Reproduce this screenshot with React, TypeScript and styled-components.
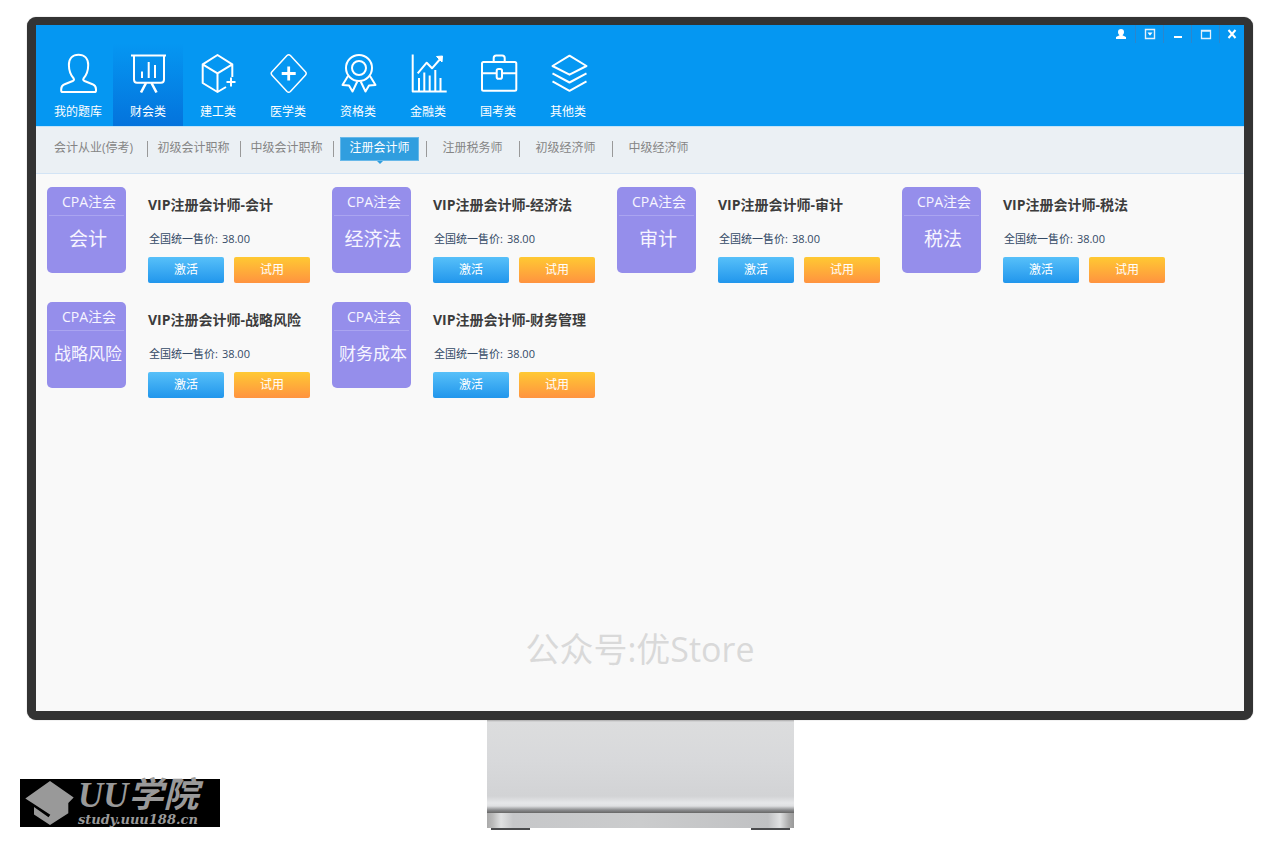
import React from "react";
import styled, { createGlobalStyle, css } from "styled-components";

const GlobalStyle = createGlobalStyle`
  * { box-sizing: border-box; }
  body {
    margin: 0;
    background: #fff;
    font-family: "Open Sans", "Noto Sans CJK SC", sans-serif;
    font-size: 12px;
  }
  h2, p, ul { margin: 0; padding: 0; }
  a { text-decoration: none; }
  button { border: 0; padding: 0; font: inherit; cursor: pointer; }
`;

const Page = styled.div`
  min-height: 100vh;
  display: flex;
  flex-direction: column;
  padding-bottom: 17px;
`;

const Monitor = styled.div`
  flex: 1;
  display: flex;
  flex-direction: column;
  margin: 17px 27px 0;
  border: 9px solid #333;
  border-top-width: 8px;
  border-radius: 9px;
  box-shadow: 0 0 1px #777;
  background: #333;
`;

const Screen = styled.main`
  flex: 1;
  display: flex;
  flex-direction: column;
  background: #f9f9f9;
`;

const Header = styled.header`
  background: #0597f2;
  color: #fff;
`;

const WindowControls = styled.div`
  display: flex;
  justify-content: flex-end;
  height: 18px;
`;

const ControlButton = styled.button`
  width: 28px;
  display: flex;
  align-items: center;
  justify-content: center;
  background: none;
  color: #fff;
  & + & { border-left: 1px solid #2c86cc; }
  &:last-child { width: 25px; }
`;

const CategoryNav = styled.nav`
  display: flex;
  padding-left: 7px;
`;

const Category = styled.a<{ $active?: boolean }>`
  width: 70px;
  height: 83px;
  padding-top: 10px;
  display: flex;
  flex-direction: column;
  align-items: center;
  gap: 9px;
  color: #fff;
  line-height: 16px;
  white-space: nowrap;
  ${(p) => p.$active && css`background: linear-gradient(#0597f2, #0473dc);`}
`;

const LineIcon = styled.svg`
  width: 42px;
  height: 42px;
  fill: none;
  stroke: #fff;
  stroke-width: 2;
  stroke-linejoin: round;
`;

const SubNav = styled.nav`
  display: flex;
  height: 48px;
  padding-top: 11px;
  padding-left: 18px;
  background: #ebf0f4;
  border-top: 1px solid #c5e4f8;
  border-bottom: 1px solid #d3e4f5;
`;

const SubItem = styled.div`
  display: flex;
  justify-content: center;
  width: 93px;
  height: 22px;
  &:first-child { justify-content: flex-start; }
  & + & {
    background: linear-gradient(#999, #999) 0 3px / 1px 16px no-repeat;
  }
`;

const SubLink = styled.a<{ $active?: boolean }>`
  position: relative;
  height: 24px;
  width: 79px;
  text-align: center;
  line-height: 20px;
  white-space: nowrap;
  color: #858585;
  ${(p) =>
    p.$active &&
    css`
      margin-top: -1px;
      line-height: 20px;
      background: #309edf;
      border: 1px solid #67b8e9;
      color: #fff;
      &::after {
        content: "";
        position: absolute;
        top: 23px;
        left: 36px;
        border: 3px solid transparent;
        border-top-color: #309edf;
        border-bottom: 0;
      }
    `}
`;

const CourseGrid = styled.section`
  display: grid;
  grid-template-columns: repeat(auto-fill, 285px);
  row-gap: 19px;
  padding: 13px 0 0 11px;
`;

const CourseCard = styled.article`
  display: flex;
  gap: 22px;
`;

const Cover = styled.div`
  width: 79px;
  height: 86px;
  border-radius: 5px;
  background: #958eeb;
  color: #f7f5ff;
  text-align: center;
  white-space: nowrap;
`;

const CoverTop = styled.p`
  margin: 0 2px;
  padding: 4px 0 2px 5px;
  border-bottom: 1px solid #aaa4f0;
  font-size: 14px;
  line-height: 22px;
`;

const CoverName = styled.p<{ $long: boolean }>`
  padding: 9px 0 9px 3px;
  font-size: ${(p) => (p.$long ? 17 : 19)}px;
  line-height: 28px;
`;

const CourseInfo = styled.div`
  padding-top: 8px;
`;

const CourseTitle = styled.h2`
  font-size: 14px;
  line-height: 20px;
  font-weight: 700;
  color: #3c3c3c;
  white-space: nowrap;
`;

const Price = styled.p`
  display: flex;
  gap: 4px;
  padding: 15px 0 9px 1px;
  font-size: 11px;
  line-height: 18px;
  color: #344a66;
`;

const Actions = styled.div`
  display: flex;
  gap: 10px;
`;

const ActionButton = styled.button<{ $tone: "blue" | "orange" }>`
  width: 76px;
  height: 26px;
  padding-bottom: 1px;
  border-radius: 2px;
  color: #fff;
  line-height: 16px;
  background: ${(p) =>
    p.$tone === "blue"
      ? "linear-gradient(#57c0f9, #2196ec)"
      : "linear-gradient(#ffc933, #ff9340)"};
`;

const Watermark = styled.p`
  && { margin: auto 0 38px; }
  padding-top: 40px;
  text-align: center;
  font-size: 34px;
  line-height: 48px;
  color: #d9d9d9;
`;

const Base = styled.footer`
  display: grid;
  grid-template-columns: 1fr 307px 1fr;
  align-items: end;
  padding: 0 20px;
`;

const SiteLogo = styled.a`
  display: flex;
  align-items: center;
  width: 200px;
  height: 48px;
  margin-bottom: 3px;
  padding-left: 4px;
  background: #000;
  color: #999;
  font-weight: 700;
  font-style: italic;
`;

const LogoText = styled.span`
  display: flex;
  flex-direction: column;
  margin-left: 4px;
  white-space: nowrap;
`;

const LogoName = styled.span`
  font-family: "Liberation Serif", "Noto Sans CJK SC", serif;
  font-size: 35px;
  line-height: 33px;
`;

const LogoUrl = styled.span`
  font-family: "DejaVu Serif", serif;
  font-size: 13px;
  line-height: 15px;
`;

const Stand = styled.div`
  display: flex;
  flex-direction: column;
`;

const StandNeck = styled.div`
  height: 93px;
  background: linear-gradient(
    #aaa 0, #dcddde 2px, #d8d9db 40px, #d2d3d5 76px, #e6e7e9 83px, #dfe0e2 86px, #8b8c8e 90px, #666 93px
  );
`;

const StandFoot = styled.div`
  height: 15px;
  background: linear-gradient(
    90deg, #aaa 0, #bbb 6px, #e0e1e2 14px, #c6c7c9 26px, #cbcccd 50%,
    #c0c1c3 calc(100% - 26px), #e0e1e2 calc(100% - 14px), #aaa calc(100% - 5px), #999 100%
  );
`;

const StandPads = styled.div`
  display: flex;
  justify-content: space-between;
  padding: 0 4px;
`;

const Pad = styled.span`
  width: 39px;
  height: 2px;
  background: #4a4b4d;
`;

const categories = [
  {
    name: "我的题库",
    icon: (
      <path d="M21.5 1.7c6 0 9.700 4 9.700 10.300 0 6-2 10.500-4.700 13.500-.8 1 0 2 1 2.500l8 3.200c2.300 1 3.500 2.600 3.500 5v1.200c0 1-.6 1.600-1.600 1.600H5.800c-1 0-1.600-.6-1.600-1.600v-1.200c0-2.400 1.200-4 3.500-5l8-3.200c1-.5 1.800-1.500 1-2.500-2.700-3-4.800-7.500-4.800-13.500C11.900 5.700 15.500 1.700 21.500 1.700z" />
    ),
  },
  {
    name: "财会类",
    icon: (
      <>
        <path d="M4 2.500h35M7 2.500v24c0 2 1 3.200 3 3.200h24c2 0 3-1.200 3-3.200v-24" />
        <path d="M15 18.500v6.500M21.700 9v16M28 12v13" />
        <path d="M19 30l-5 9.500M24.500 30l5 9.500" strokeWidth="2.600" />
      </>
    ),
  },
  {
    name: "建工类",
    icon: (
      <>
        <path d="M35.300 24V11.300L20.500 2 5.700 11.300V30l14.800 9 8.500-5M5.700 11.300l14.800 9 14.800-9M20.500 20.300V39" />
        <path d="M34 24.500v9M29.500 29h9" />
      </>
    ),
  },
  {
    name: "医学类",
    icon: (
      <>
        <path d="M20 2.500q1.700-1.600 3.400 0l15 16.300q1.600 1.700 0 3.400l-15 16.300q-1.700 1.600-3.400 0l-15-16.300q-1.600-1.700 0-3.400z" strokeWidth="1.500" />
        <path d="M21.700 13.500v14M14.700 20.500h14" strokeWidth="2.800" />
      </>
    ),
  },
  {
    name: "资格类",
    icon: (
      <>
        <circle cx="22" cy="15" r="13" />
        <circle cx="22" cy="15" r="7" />
        <path d="M11 23l-5.500 9 6.500.5 3.500 6 4.800-10M33 23l5.500 9-6.500.5-3.500 6-4.800-10" />
      </>
    ),
  },
  {
    name: "金融类",
    icon: (
      <>
        <path d="M5.700 1.500v37h34M12 25v13M17.300 19.500V38M22.700 22.500V38M28.300 17v21M33.500 25v13" />
        <path d="M10.700 20.300l9-10.600 5.300 5.600L34.500 4.500" />
        <path d="M29.500 3.500l6-.5-.5 6z" fill="#fff" strokeWidth="1" />
      </>
    ),
  },
  {
    name: "国考类",
    icon: (
      <>
        <rect x="5" y="9" width="34.300" height="28.700" rx="1.500" />
        <path d="M16.700 9V5q0-2.500 2.500-2.500h6q2.500 0 2.500 2.500v4M5 20.300h14.500M25 20.300h14.300" />
        <rect x="19.700" y="16" width="5.300" height="9.700" rx="1.800" />
      </>
    ),
  },
  {
    name: "其他类",
    icon: <path d="M22.500 2.700L39.500 13 22.500 21.700 5.500 13zM5.500 20.300l17 9.200 17-9.200M5.500 28.300l17 9.500 17-9.500" />,
  },
];

const subCategories = [
  "会计从业(停考)",
  "初级会计职称",
  "中级会计职称",
  "注册会计师",
  "注册税务师",
  "初级经济师",
  "中级经济师",
];

const courses = [
  { cover: "会计", title: "会计" },
  { cover: "经济法", title: "经济法" },
  { cover: "审计", title: "审计" },
  { cover: "税法", title: "税法" },
  { cover: "战略风险", title: "战略风险" },
  { cover: "财务成本", title: "财务管理" },
];

const controls = [
  {
    label: "账户",
    icon: <path d="M6 1c2 0 3 1 3 3 0 1.500-.7 2.500-1.500 3.200L11 9v2H1V9l3.500-1.800C3.700 6.500 3 5.500 3 4c0-2 1-3 3-3z" fill="#fff" />,
  },
  {
    label: "菜单",
    icon: (
      <>
        <path d="M1.500 1.500h9v9h-9z" stroke="#e4f1fb" fill="none" strokeWidth="1.400" />
        <path d="M3.500 4.500h5L6 7.800z" fill="#fff" />
      </>
    ),
  },
  { label: "最小化", icon: <path d="M2 8h8v2H2z" fill="#fff" /> },
  {
    label: "最大化",
    icon: <path d="M1.500 2.500h9v8h-9zM1.500 3h9" stroke="#e4f1fb" fill="none" strokeWidth="1.300" />,
  },
  { label: "关闭", icon: <path d="M2.500 2l7 8M9.500 2l-7 8" stroke="#fff" strokeWidth="2" /> },
];

export default function App() {
  return (
    <>
      <GlobalStyle />
      <Page>
        <Monitor>
          <Screen>
            <Header>
              <WindowControls>
                {controls.map((c) => (
                  <ControlButton key={c.label} type="button" aria-label={c.label}>
                    <svg width="12" height="12" viewBox="0 0 12 12">{c.icon}</svg>
                  </ControlButton>
                ))}
              </WindowControls>
              <CategoryNav>
                {categories.map((c, i) => (
                  <Category key={c.name} href="#" $active={i === 1}>
                    <LineIcon viewBox="0 0 42 42">{c.icon}</LineIcon>
                    {c.name}
                  </Category>
                ))}
              </CategoryNav>
            </Header>
            <SubNav>
              {subCategories.map((name, i) => (
                <SubItem key={name}>
                  <SubLink href="#" $active={i === 3}>{name}</SubLink>
                </SubItem>
              ))}
            </SubNav>
            <CourseGrid>
              {courses.map((c) => (
                <CourseCard key={c.cover}>
                  <Cover>
                    <CoverTop>CPA注会</CoverTop>
                    <CoverName $long={c.cover.length > 3}>{c.cover}</CoverName>
                  </Cover>
                  <CourseInfo>
                    <CourseTitle>VIP注册会计师-{c.title}</CourseTitle>
                    <Price>
                      <span>全国统一售价:</span>
                      <span>38.00</span>
                    </Price>
                    <Actions>
                      <ActionButton type="button" $tone="blue">激活</ActionButton>
                      <ActionButton type="button" $tone="orange">试用</ActionButton>
                    </Actions>
                  </CourseInfo>
                </CourseCard>
              ))}
            </CourseGrid>
            <Watermark>公众号:优Store</Watermark>
          </Screen>
        </Monitor>
        <Base>
          <SiteLogo href="#">
            <svg width="50" height="46" viewBox="0 0 50 46" fill="#999">
              <path d="M26 1l23.700 16.500-5.400 5.500v10.300L26 45 10 34.500v-7.500L24.500 37.300l1.800-2.600L8.700 23.300 1.300 18.500z" />
            </svg>
            <LogoText>
              <LogoName>UU学院</LogoName>
              <LogoUrl>study.uuu188.cn</LogoUrl>
            </LogoText>
          </SiteLogo>
          <Stand>
            <StandNeck />
            <StandFoot />
            <StandPads>
              <Pad />
              <Pad />
            </StandPads>
          </Stand>
        </Base>
      </Page>
    </>
  );
}
